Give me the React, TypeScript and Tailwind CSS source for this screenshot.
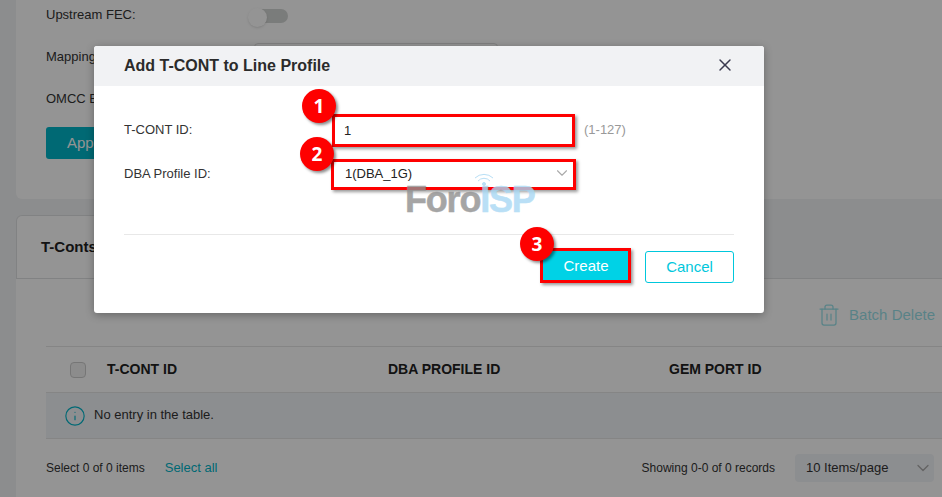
import React from 'react';
import { ChevronDown, X, Info, Trash2 } from 'lucide-react';

const Badge: React.FC<{ n: number; className: string }> = ({ n, className }) => (
  <div className={`absolute w-[34px] h-[34px] pt-px rounded-full bg-[#fe0000] text-white font-bold text-[19px] font-['Open_Sans',sans-serif] flex items-center justify-center shadow-[2px_2px_3px_rgba(0,0,0,0.45)] ${className}`}>
    {n}
  </div>
);

const App: React.FC = () => {
  return (
    <div className="relative w-[942px] h-[497px] overflow-hidden bg-[#f1f3f5] text-[13px] text-[#333] font-['Liberation_Sans',Arial,sans-serif]">
      {/* page behind the dialog */}
      <div className="ml-4">
        <div className="bg-white h-[199px] rounded-bl-md pl-[30px] flex flex-col items-start">
          <div className="flex items-center h-[30px]">
            <span className="w-[204px]">Upstream FEC:</span>
            <div className="relative w-[38px] h-[14px] mt-[2px] rounded-full bg-[#d3d6d4]">
              <div className="absolute -left-0.5 -top-px w-[19px] h-[19px] rounded-full bg-white shadow" />
            </div>
          </div>
          <div className="flex items-center h-[30px] mt-3">
            <span className="w-[208px]">Mapping Mode:</span>
            <div className="w-[244px] h-7 border border-[#ddd] rounded" />
          </div>
          <div className="flex items-center h-[30px] mt-3">
            <span>OMCC Encryption:</span>
          </div>
          <button className="mt-[13px] w-[110px] h-8 rounded-[3px] bg-[#00b5c9] text-white text-left pl-[21px] text-[15px]">Apply</button>
        </div>

        <div className="mt-4 flex h-[64px] border-b border-[#dfe0e2]">
          <div className="w-[120px] bg-white border border-b-0 border-[#dfe0e2] rounded-t-md pl-6 pt-5 font-bold text-[15px] text-[#222]">T-Conts</div>
        </div>

        <div className="bg-white pl-[30px] h-[219px]">
          <div className="flex justify-end items-center h-[67px] pt-[5px] pr-[7px] text-[#00b5c9] text-[15px] gap-2 opacity-40">
            <Trash2 size={24} strokeWidth={1.25} />
            <span>Batch Delete</span>
          </div>
          <div className="flex items-center h-[47px] border-t border-b border-[#e5e5e5] font-bold text-[14px] text-[#222]">
            <div className="w-4 h-4 ml-6 border border-[#ccc] rounded-sm bg-[#f1f1f1]" />
            <span className="w-[281px] ml-[21px]">T-CONT ID</span>
            <span className="w-[281px]">DBA PROFILE ID</span>
            <span>GEM PORT ID</span>
          </div>
          <div className="flex items-center h-[46px] bg-[#f2f4f8] border-b border-[#e5e5e5] pl-[18px] gap-2">
            <Info size={22} strokeWidth={1.25} className="text-[#00b5c9]" />
            <span className="pb-px">No entry in the table.</span>
          </div>
          <div className="flex items-center mt-[15px] text-[12px]">
            <span>Select 0 of 0 items</span>
            <span className="ml-[20px] text-[13px] text-[#00b5c9]">Select all</span>
            <span className="ml-auto">Showing 0-0 of 0 records</span>
            <div className="ml-5 mr-[8px] w-[139px] h-7 rounded bg-[#f2f4f8] flex items-center justify-between pl-[11px] pr-px text-[13px]">
              10 Items/page
              <ChevronDown size={20} strokeWidth={1.5} className="text-[#aaa]" />
            </div>
          </div>
        </div>
      </div>

      {/* backdrop */}
      <div className="absolute inset-0 bg-black/[0.42]" />

      {/* dialog */}
      <div className="absolute left-[94px] top-[46px] w-[670px] h-[267px] bg-white rounded-[3px] overflow-hidden shadow-[0_2px_8px_rgba(0,0,0,0.3)]">
        <div className="h-10 bg-[#f1f2f4] flex items-center justify-between pl-[30px] pr-[29px]">
          <span className="font-bold text-[16px] text-[#2b2b2b]">Add T-CONT to Line Profile</span>
          <X size={20} strokeWidth={1.75} className="text-[#3a3a50] mb-[2px]" />
        </div>
        <div className="px-[30px]">
          <div className="flex items-center mt-[28px] h-[33px]">
            <span className="w-[208px] pb-[2px]">T-CONT ID:</span>
            <div className="w-[243px] h-[33px] border-[3px] border-[#fe0000] pl-[9px] flex items-center text-[#222] shadow-[2px_2px_3px_rgba(0,0,0,0.4)]">1</div>
            <span className="ml-[9px] pb-[2px] text-[#999]">(1-127)</span>
          </div>
          <div className="flex items-center mt-[12px] h-[31px]">
            <span className="w-[207px] pb-[2px]">DBA Profile ID:</span>
            <div className="w-[245px] h-[31px] border-[3px] border-[#fe0000] pl-[11px] pr-[2px] flex items-center justify-between text-[#222] shadow-[2px_2px_3px_rgba(0,0,0,0.4)]">
              <span className="pb-[2px]">1(DBA_1G)</span>
              <ChevronDown size={18} strokeWidth={1.5} className="text-[#aaa] mb-[3px]" />
            </div>
          </div>
          <div className="mt-[44px] border-t border-[#e8e8e8] flex justify-end items-start gap-[14px] pt-[13px]">
            <button className="w-[91px] h-[35px] pt-px pl-px border-[3px] border-[#fe0000] bg-[#00d2e6] text-white text-[15px] shadow-[2px_2px_3px_rgba(0,0,0,0.4)]">Create</button>
            <button className="w-[89px] h-8 mt-[3px] rounded-[3px] border border-[#00c7dc] text-[#00c7dc] text-[15px]">Cancel</button>
          </div>
        </div>
      </div>

      {/* watermark */}
      <div className="absolute left-[405px] top-[180px] flex font-bold text-[36px] leading-10 tracking-[-1.2px] [-webkit-text-stroke:0.5px_currentColor] opacity-80 pointer-events-none">
        <span className="text-[#8f8f8f]">Foro</span>
        <span className="text-[#a8d8f4]">ISP</span>
        <svg className="absolute left-[69px] -top-2 w-5 h-[14px]" viewBox="0 0 20 14" fill="none" stroke="#a8d8f4" strokeWidth="1">
          <path d="M1 6a13 13 0 0 1 18 0" />
          <path d="M4 9a8 8 0 0 1 12 0" />
          <circle cx="10" cy="12" r="1.5" fill="#a8d8f4" />
        </svg>
      </div>

      <Badge n={1} className="left-[302px] top-[89px]" />
      <Badge n={2} className="left-[300px] top-[137px]" />
      <Badge n={3} className="left-[520px] top-[227px]" />
    </div>
  );
};

export default App;
